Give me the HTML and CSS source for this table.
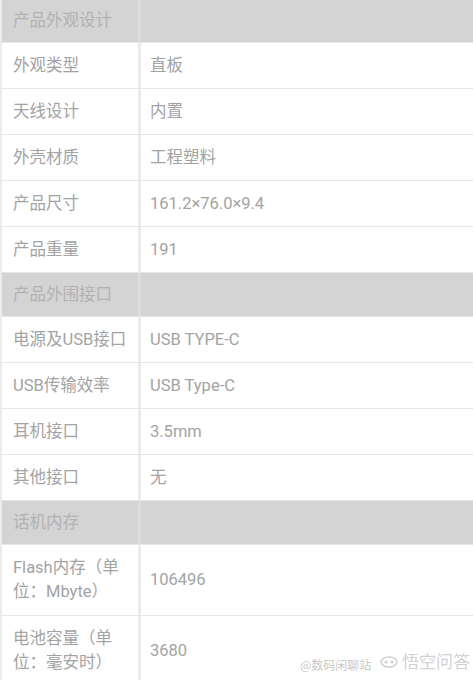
FILE: index.html
```html
<!DOCTYPE html>
<html lang="zh-CN">
<head>
    <meta charset="UTF-8">
    <meta name="viewport" content="width=device-width, initial-scale=1.0">
    <title>产品参数</title>
    <link rel="stylesheet" href="styles.css">
</head>
<body>
    <div class="spec-table">
        <div class="row section"><div class="cell label">产品外观设计</div><div class="cell value"></div></div>
        <div class="row"><div class="cell label">外观类型</div><div class="cell value">直板</div></div>
        <div class="row"><div class="cell label">天线设计</div><div class="cell value">内置</div></div>
        <div class="row"><div class="cell label">外壳材质</div><div class="cell value">工程塑料</div></div>
        <div class="row"><div class="cell label">产品尺寸</div><div class="cell value">161.2×76.0×9.4</div></div>
        <div class="row"><div class="cell label">产品重量</div><div class="cell value">191</div></div>

        <div class="row section"><div class="cell label">产品外围接口</div><div class="cell value"></div></div>
        <div class="row"><div class="cell label">电源及USB接口</div><div class="cell value">USB TYPE-C</div></div>
        <div class="row"><div class="cell label">USB传输效率</div><div class="cell value">USB Type-C</div></div>
        <div class="row"><div class="cell label">耳机接口</div><div class="cell value">3.5mm</div></div>
        <div class="row"><div class="cell label">其他接口</div><div class="cell value">无</div></div>

        <div class="row section"><div class="cell label">话机内存</div><div class="cell value"></div></div>
        <div class="row tall"><div class="cell label">Flash内存（单位：Mbyte）</div><div class="cell value">106496</div></div>
        <div class="row tall"><div class="cell label">电池容量（单位：毫安时）</div><div class="cell value">3680</div></div>
    </div>

    <div class="watermark weibo">@数码闲聊站</div>
    <div class="watermark wukong">
        <svg class="wk-icon" width="18" height="14" viewBox="0 0 18 14">
            <ellipse cx="9" cy="8" rx="8" ry="5" fill="none" stroke="#cfcfcf" stroke-width="1.5"/>
            <circle cx="6" cy="8" r="1.6" fill="#cfcfcf"/>
            <circle cx="12" cy="8" r="1.6" fill="#cfcfcf"/>
        </svg>
        悟空问答
    </div>
</body>
</html>
```

FILE: styles.css
```css
body {
    margin: 0;
    background-color: #ffffff;
    font-family: Roboto, "Noto Sans CJK SC", sans-serif;
    color: #a3a3a3;
    overflow: hidden;
}

.spec-table {
    width: 473px;
    border-left: 2px solid #ececec;
    box-sizing: border-box;
}

.row {
    display: grid;
    grid-template-columns: 139px 1fr;
    height: 46px;
    border-bottom: 1px solid #e6e6e6;
    box-sizing: border-box;
}

.row.section {
    background-color: #d4d4d4;
    height: 44px;
    border-bottom: 1px solid #e8e8e8;
}

.row.section:first-child {
    height: 43px;
}

.row.tall {
    height: 71px;
}

.cell {
    display: flex;
    align-items: center;
    font-size: 16.5px;
    line-height: 24px;
}

.label {
    padding: 0 8px 0 11px;
    border-right: 3px solid #ececec;
}

.value {
    padding-left: 9px;
}

.section .label {
    color: #b2b2b2;
    border-right-color: #dcdcdc;
}

.tall .label {
    padding-right: 14px;
}

.watermark {
    position: absolute;
    font-family: "Noto Sans CJK SC", sans-serif;
}

.weibo {
    left: 300px;
    top: 656px;
    font-size: 12px;
    color: rgba(160, 160, 160, 0.6);
}

.wukong {
    left: 380px;
    top: 648px;
    display: flex;
    align-items: center;
    gap: 4px;
    font-size: 17px;
    color: #d2d2d2;
}
```
